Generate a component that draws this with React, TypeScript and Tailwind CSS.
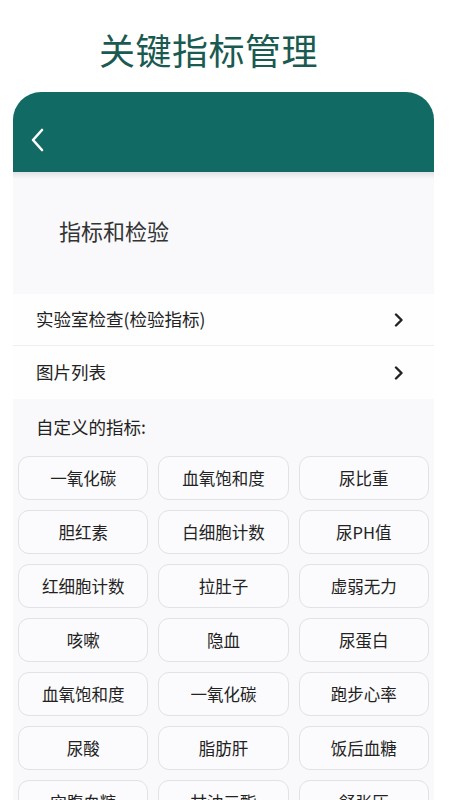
import React from "react";

const rows: string[][] = [
  ["一氧化碳", "血氧饱和度", "尿比重"],
  ["胆红素", "白细胞计数", "尿PH值"],
  ["红细胞计数", "拉肚子", "虚弱无力"],
  ["咳嗽", "隐血", "尿蛋白"],
  ["血氧饱和度", "一氧化碳", "跑步心率"],
  ["尿酸", "脂肪肝", "饭后血糖"],
  ["空腹血糖", "甘油三酯", "舒张压"],
];

function Chevron() {
  return (
    <svg width="10" height="14" viewBox="0 0 10 14" fill="none">
      <polyline points="2,1.5 7.5,7 2,12.5" stroke="#222" strokeWidth="2.4" strokeLinecap="round" strokeLinejoin="round" />
    </svg>
  );
}

export default function App() {
  const font = { fontFamily: '"Noto Sans CJK SC", "Noto Sans", sans-serif' };
  return (
    <div className="w-[450px] h-[800px] overflow-hidden bg-white" style={font}>
      <div className="h-[92px] flex items-center pl-[99px] pt-[6px]">
        <h1 className="text-[36px] leading-none text-[#1a5a51] font-normal tracking-[0.5px]">关键指标管理</h1>
      </div>
      <div className="ml-[13px] w-[421px] flex flex-col">
        <div className="h-[80px] bg-[#116b64] rounded-t-[28px] flex items-center pl-[18px] pt-[16px]">
          <svg width="14" height="24" viewBox="0 0 14 24" fill="none">
            <polyline points="11,2 2,12 11,22" stroke="white" strokeWidth="2.6" strokeLinecap="round" strokeLinejoin="round" />
          </svg>
        </div>
        <div className="bg-[#f9f8fb] relative">
          <div className="absolute top-0 left-0 right-0 h-[7px] bg-gradient-to-b from-[#e2e2e5] to-transparent" />
          <div className="h-[122px] flex items-center pl-[46px] pb-[6px]">
            <span className="text-[22px] text-[#333]">指标和检验</span>
          </div>
          <div className="bg-[#fefeff] flex flex-col">
            <div className="h-[52px] flex items-center justify-between pl-[23px] pr-[30px] border-b border-[#eeedf0]">
              <span className="text-[17.5px] text-[#222]">实验室检查(检验指标)</span>
              <Chevron />
            </div>
            <div className="h-[53px] flex items-center justify-between pl-[23px] pr-[30px]">
              <span className="text-[17.5px] text-[#222]">图片列表</span>
              <Chevron />
            </div>
          </div>
          <div className="h-[57px] flex items-center pl-[23px]">
            <span className="text-[17.5px] text-[#222]">自定义的指标:</span>
          </div>
          <div className="px-[5px] grid grid-cols-3 gap-x-[10px] gap-y-[10px]">
            {rows.flat().map((t, i) => (
              <div
                key={i}
                className="h-[44px] rounded-[11px] border border-[#e2e1e5] bg-[#fbfafc] flex items-center justify-center text-[16.5px] text-[#222]"
              >
                {t}
              </div>
            ))}
          </div>
          <div className="h-[20px]" />
        </div>
      </div>
    </div>
  );
}
